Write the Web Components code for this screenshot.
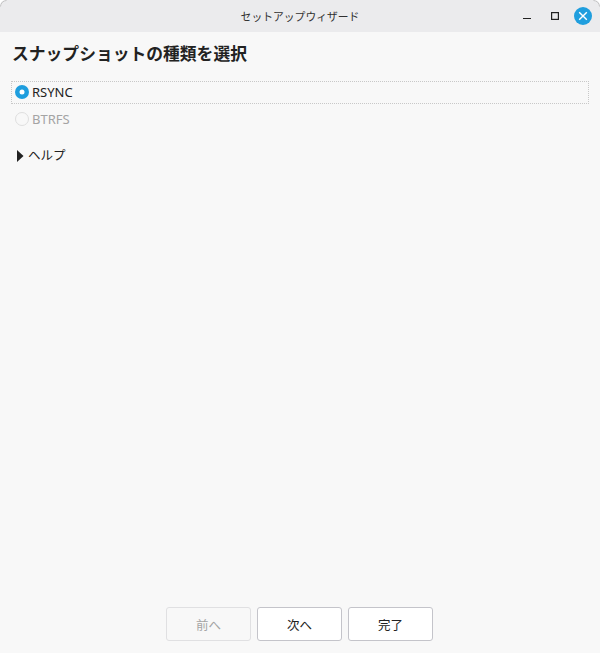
<!DOCTYPE html>
<html lang="ja">
<head>
<meta charset="utf-8">
<title>セットアップウィザード</title>
<style>
  html, body { margin: 0; height: 100%; background: #fff; }
  body { font-family: "Noto Sans", "Noto Sans CJK JP", sans-serif; font-size: 13px; color: #222; }
</style>
</head>
<body>
<wizard-window>
  <span slot="title">セットアップウィザード</span>
  <h-heading>スナップショットの種類を選択</h-heading>
  <radio-row checked focused>RSYNC</radio-row>
  <radio-row disabled>BTRFS</radio-row>
  <help-expander>ヘルプ</help-expander>
  <wizard-button slot="footer" disabled>前へ</wizard-button>
  <wizard-button slot="footer">次へ</wizard-button>
  <wizard-button slot="footer">完了</wizard-button>
</wizard-window>

<script>
class WizardWindow extends HTMLElement {
  constructor() {
    super();
    const shadow = this.attachShadow({ mode: 'open' });
    shadow.innerHTML = `
      <style>
        :host { display: flex; flex-direction: column; height: 653px; background: #f8f8f8; border-radius: 6px 6px 0 0; overflow: hidden; position: relative; }
        .bar { flex: none; height: 32px; background: #ebebed; display: flex; align-items: center; justify-content: center; position: relative; font-size: 10.8px; color: #303030; }
        .controls { position: absolute; top: 0; right: 0; height: 32px; display: flex; align-items: center; }
        .controls svg { display: block; }
        .corner { position: absolute; top: 0; display: block; }
        .content { flex: 1; padding: 11px 11px 0 11px; display: flex; flex-direction: column; }
        .footer { flex: none; display: flex; justify-content: center; gap: 6px; padding: 0 1px 12px 0; }
      </style>
      <div class="bar">
        <slot name="title"></slot>
        <div class="controls">
          <svg width="18" height="18" viewBox="0 0 18 18" style="margin-right:10px"><path d="M5 11.5h8" stroke="#222" stroke-width="1"/></svg>
          <svg width="18" height="18" viewBox="0 0 18 18" style="margin-right:10px"><rect x="5.6" y="5.6" width="6.8" height="6.8" fill="none" stroke="#222" stroke-width="1.2"/></svg>
          <svg width="18" height="18" viewBox="0 0 18 18" style="margin-right:8px"><circle cx="9" cy="9" r="9" fill="#1f9ede"/><path d="M5.2 5.2l7.6 7.6M12.8 5.2l-7.6 7.6" stroke="#fff" stroke-width="1.4"/></svg>
        </div>
        <svg class="corner" style="left:0" width="7" height="7" viewBox="0 0 7 7"><path d="M.5 6.5A6 6 0 0 1 6.5 .5" fill="none" stroke="#c2c2c2"/></svg>
        <svg class="corner" style="right:0" width="7" height="7" viewBox="0 0 7 7"><path d="M.5 .5A6 6 0 0 1 6.5 6.5" fill="none" stroke="#c2c2c2"/></svg>
      </div>
      <div class="content"><slot></slot></div>
      <div class="footer"><slot name="footer"></slot></div>`;
  }
}
customElements.define('wizard-window', WizardWindow);

class HHeading extends HTMLElement {
  constructor() {
    super();
    const shadow = this.attachShadow({ mode: 'open' });
    shadow.innerHTML = `
      <style>
        :host { display: block; font-size: 16.8px; font-weight: 700; line-height: 22px; color: #222; padding-left: 1px; margin-bottom: 16px; }
      </style>
      <slot></slot>`;
  }
}
customElements.define('h-heading', HHeading);

class RadioRow extends HTMLElement {
  constructor() {
    super();
    const shadow = this.attachShadow({ mode: 'open' });
    const checked = this.hasAttribute('checked');
    const disabled = this.hasAttribute('disabled');
    shadow.innerHTML = `
      <style>
        :host { display: block; height: 23px; margin-bottom: 4px; }
        .row { box-sizing: border-box; height: 23px; display: flex; align-items: center; gap: 3px; padding-left: 3px; border: 1px dotted transparent; line-height: 1; }
        :host([focused]) .row { border-color: #c8c8c8; }
        :host([disabled]) .row { color: #a4a4a4; }
        svg { flex: none; display: block; margin-top: -1px; }
      </style>
      <div class="row">
        <svg width="14" height="14" viewBox="0 0 14 14">${checked
          ? '<circle cx="7" cy="7" r="7" fill="#1f9ede"/><circle cx="7" cy="7" r="2.5" fill="#fff"/>'
          : `<circle cx="7" cy="7" r="6.5" fill="${disabled ? '#f8f8f8' : '#fff'}" stroke="#dedede"/>`}</svg>
        <slot></slot>
      </div>`;
  }
}
customElements.define('radio-row', RadioRow);

class HelpExpander extends HTMLElement {
  constructor() {
    super();
    const shadow = this.attachShadow({ mode: 'open' });
    shadow.innerHTML = `
      <style>
        :host { display: flex; align-items: center; gap: 4px; height: 18px; margin-top: 10px; padding-left: 6px; color: #222; font-size: 12.5px; }
        svg { flex: none; display: block; margin-top: 4px; }
      </style>
      <svg width="7" height="12" viewBox="0 0 7 12"><path d="M0 0l6.5 6L0 12z" fill="#222"/></svg>
      <slot></slot>`;
  }
}
customElements.define('help-expander', HelpExpander);

class WizardButton extends HTMLElement {
  constructor() {
    super();
    const shadow = this.attachShadow({ mode: 'open' });
    shadow.innerHTML = `
      <style>
        :host { display: flex; align-items: center; justify-content: center; box-sizing: border-box; width: 85px; height: 34px; background: #fff; border: 1px solid #c4c4ca; border-radius: 3px; color: #222; font-size: 12.5px; }
        :host([disabled]) { background: #f8f8f8; border-color: #e0e0e2; color: #a4a4a4; }
      </style>
      <slot></slot>`;
  }
}
customElements.define('wizard-button', WizardButton);
</script>
</body>
</html>
